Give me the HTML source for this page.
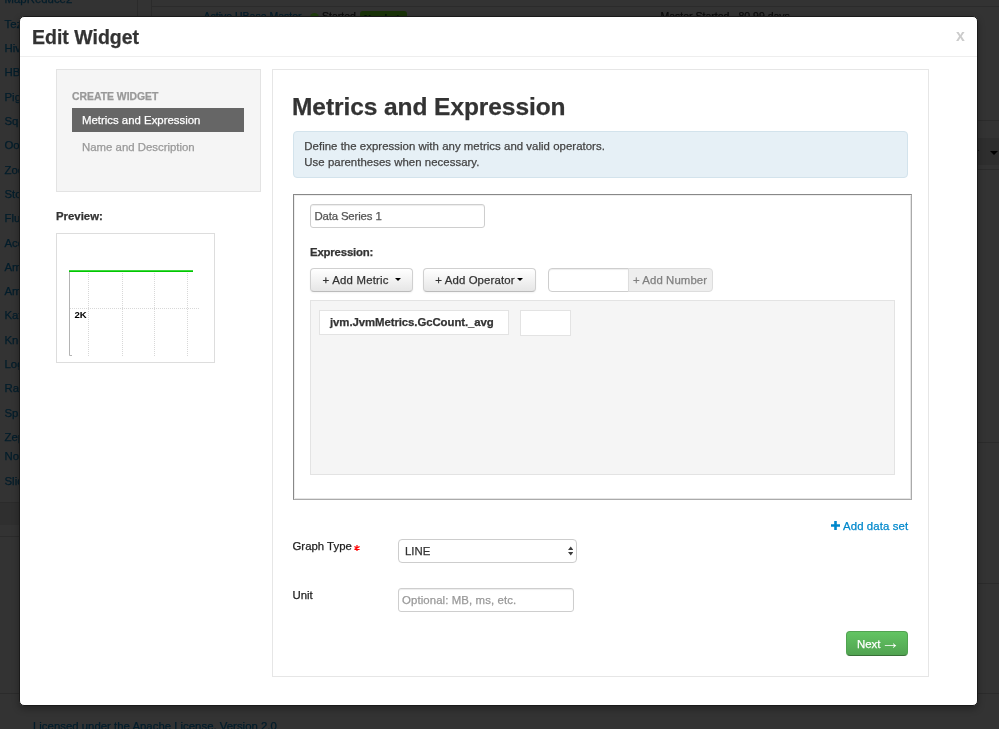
<!DOCTYPE html>
<html lang="en">
<head>
<meta charset="utf-8">
<title>Edit Widget</title>
<style>
html,body{margin:0;padding:0;}
body{width:999px;height:729px;overflow:hidden;position:relative;background:#333;
  font-family:"Liberation Sans","Helvetica Neue",Helvetica,Arial,sans-serif;font-size:12px;line-height:16px;color:#333;}
*{box-sizing:border-box;}
.abs{position:absolute;}
.t{position:absolute;white-space:pre;line-height:16px;font-size:11.4px;letter-spacing:0;-webkit-text-stroke:0.25px currentColor;}
.b{font-weight:bold;}

/* ---------- dimmed page behind the modal ---------- */
#bg{position:absolute;left:0;top:0;width:999px;height:729px;background:#333;overflow:hidden;will-change:transform;}
#bg .lnk{position:absolute;left:4.500px;color:#031d2b;font-size:11.4px;line-height:16px;white-space:pre;-webkit-text-stroke:0.25px currentColor;}
#bg .sm{font-size:10.5px;}
#bg .ln{position:absolute;background:#2b2b2b;}

/* ---------- modal ---------- */
#modal{position:absolute;left:19px;top:16px;width:959px;height:690px;background:#fff;
  border:1px solid #1a1a1a;border-radius:5px;box-shadow:0 3px 7px rgba(0,0,0,.3);}
#content{position:absolute;left:0;top:0;width:999px;height:729px;will-change:transform;}
.well{position:absolute;background:#f5f5f5;border:1px solid #e3e3e3;}
.panel{position:absolute;background:#fff;border:1px solid #e6e6e6;}
.inp{position:absolute;background:#fff;border:1px solid #cecece;border-radius:3px;box-shadow:inset 0 1px 1px rgba(0,0,0,.075);}
.btn{position:absolute;border:1px solid #d0d0d0;border-bottom-color:#bbb;border-radius:4px;
  background:linear-gradient(to bottom,#fff,#e6e6e6);box-shadow:0 1px 2px rgba(0,0,0,.05);}
.caret{position:absolute;width:0;height:0;border-left:3px solid transparent;border-right:3px solid transparent;border-top:3px solid #000;}
</style>
</head>
<body>
<div id="bg">
  <!-- sidebar service list (dimmed) -->
  <div class="lnk" style="top:-9px">MapReduce2</div>
  <div class="lnk" style="top:16px">Tez</div>
  <div class="lnk" style="top:40px">Hive</div>
  <div class="lnk" style="top:64px">HBase</div>
  <div class="lnk" style="top:89px">Pig</div>
  <div class="lnk" style="top:113px">Sqoop</div>
  <div class="lnk" style="top:137px">Oozie</div>
  <div class="lnk" style="top:162px">ZooKeeper</div>
  <div class="lnk" style="top:186px">Storm</div>
  <div class="lnk" style="top:210px">Flume</div>
  <div class="lnk" style="top:235px">Accumulo</div>
  <div class="lnk" style="top:259px">Ambari Infra</div>
  <div class="lnk" style="top:283px">Ambari Metrics</div>
  <div class="lnk" style="top:307px">Kafka</div>
  <div class="lnk" style="top:332px">Knox</div>
  <div class="lnk" style="top:356px">Log Search</div>
  <div class="lnk" style="top:380px">Ranger</div>
  <div class="lnk" style="top:405px">Spark</div>
  <div class="lnk" style="top:429px">Zeppelin</div>
  <div class="lnk" style="top:448px">Notebook</div>
  <div class="lnk" style="top:473px">Slider</div>
  <div class="lnk sm" style="left:203.500px;top:8px">Active HBase Master</div>
  <div class="lnk sm" style="left:322px;top:8px;color:#0b0b0b">Started</div>
  <div class="abs" style="left:310px;top:12.500px;width:9px;height:9px;border-radius:5px;background:#1f3d0c"></div>
  <div class="abs" style="left:360px;top:11px;width:47px;height:14px;border-radius:3px;background:#1a3309"></div>
  <div class="lnk sm" style="left:660.500px;top:8px;color:#0b0b0b">Master Started</div>
  <div class="lnk sm" style="left:738.500px;top:8px;color:#0b0b0b">80.99 days</div>
  <div class="lnk sm" style="left:364px;top:10px;color:#06140a;font-weight:bold;font-size:9.5px">No alerts</div>
  <div class="lnk" style="left:33px;top:718px">Licensed under the Apache License, Version 2.0</div>
  <div class="ln" style="left:137px;top:0;width:1px;height:17px"></div>
  <div class="ln" style="left:151px;top:0;width:1px;height:17px"></div>
  <div class="ln" style="left:151px;top:6px;width:848px;height:1px"></div>
  <div class="ln" style="left:0;top:502px;width:19px;height:1px"></div>
  <div class="abs" style="left:0;top:503px;width:19px;height:22px;background:#2f2f2f"></div>
  <div class="ln" style="left:0;top:536px;width:19px;height:1px"></div>
  <div class="ln" style="left:0;top:693px;width:999px;height:1px"></div>
  <div class="ln" style="left:978px;top:120px;width:21px;height:1px"></div>
  <div class="abs" style="left:978px;top:138px;width:21px;height:27px;background:#2e2e2e"></div>
  <div class="ln" style="left:978px;top:169px;width:21px;height:1px"></div>
  <div class="ln" style="left:978px;top:442px;width:21px;height:1px"></div>
  <div class="ln" style="left:978px;top:583px;width:21px;height:1px"></div>
  <div class="lnk" style="left:975px;top:144px;color:#0b0b0b">r</div>
  <div class="abs" style="left:990px;top:151px;width:0;height:0;border-left:4px solid transparent;border-right:4px solid transparent;border-top:4px solid #000"></div>
</div>

<div id="modal"></div>
<div id="content">
  <div class="abs" style="left:20px;top:56px;width:957px;height:1px;background:#eee"></div>
  <div class="t b" style="left:32px;top:22px;font-size:19.5px;line-height:30px;color:#333;letter-spacing:0">Edit Widget</div>
  <div class="t b" style="left:956px;top:26px;font-size:15.8px;line-height:20px;color:#ccc;letter-spacing:0;-webkit-text-stroke:0">x</div>

  <!-- left navigation well -->
  <div class="well" style="left:56px;top:69px;width:205px;height:123px"></div>
  <div class="t b" style="left:72px;top:89px;font-size:10.4px;color:#999">CREATE WIDGET</div>
  <div class="abs" style="left:72px;top:108px;width:172px;height:24px;background:#666"></div>
  <div class="t" style="left:82px;top:112px;color:#fff">Metrics and Expression</div>
  <div class="t" style="left:82px;top:139px;color:#999">Name and Description</div>

  <!-- preview -->
  <div class="t b" style="left:56px;top:208px">Preview:</div>
  <div class="abs" style="left:56px;top:233px;width:159px;height:130px;border:1px solid #ddd;background:#fff"></div>
  <svg class="abs" style="left:56px;top:233px" width="159" height="130" viewBox="0 0 159 130">
    <g stroke="#d8d8d8" stroke-width="1" stroke-dasharray="1,1" fill="none">
      <path d="M32.5 40V123M66.5 40V123M98.5 40V123M131.5 40V123"/>
      <path d="M14 75.500H144"/>
    </g>
    <path d="M13.500 38V122.500H16" stroke="#b4b4b4" stroke-width="1" fill="none"/>
    <path d="M13 38.200H137" stroke="#00c800" stroke-width="1.700" fill="none"/>
    <text x="18.500" y="85" font-family="Liberation Sans, sans-serif" font-size="9.600" font-weight="bold" fill="#000">2K</text>
  </svg>

  <!-- right wizard content -->
  <div class="panel" style="left:272px;top:69px;width:657px;height:608px"></div>
  <div class="t b" style="left:292px;top:87px;font-size:24.5px;line-height:40px;color:#333;letter-spacing:-0.07px">Metrics and Expression</div>
  <div class="abs" style="left:293px;top:131px;width:615px;height:47px;background:#e6f0f6;border:1px solid #d3e3ec;border-radius:4px"></div>
  <div class="t" style="left:304.300px;top:138px;color:#444;letter-spacing:0.04px">Define the expression with any metrics and valid operators.</div>
  <div class="t" style="left:304.300px;top:154px;color:#444;letter-spacing:0.04px">Use parentheses when necessary.</div>

  <!-- data set fieldset -->
  <div class="abs" style="left:293px;top:194px;width:619px;height:306px;border:1px solid #888;border-right-color:#aaa;border-bottom-color:#aaa;box-shadow:inset 1px 1px 0 #eee,inset -1px -1px 0 #e4e4e4"></div>
  <div class="inp" style="left:310px;top:204px;width:175px;height:24px"></div>
  <div class="t" style="left:314.400px;top:208px;color:#555;letter-spacing:-0.14px">Data Series 1</div>
  <div class="t b" style="left:310px;top:244px;letter-spacing:-0.18px">Expression:</div>

  <div class="btn" style="left:310px;top:268px;width:103px;height:24px"></div>
  <div class="t" style="left:322.500px;top:272px;letter-spacing:0.22px">+ Add Metric</div>
  <div class="caret" style="left:395px;top:278px"></div>
  <div class="btn" style="left:423px;top:268px;width:113px;height:24px"></div>
  <div class="t" style="left:435.300px;top:272px;letter-spacing:0.12px">+ Add Operator</div>
  <div class="caret" style="left:517px;top:278px"></div>
  <div class="inp" style="left:548px;top:268px;width:81px;height:24px;border-radius:4px 0 0 4px"></div>
  <div class="abs" style="left:628px;top:268px;width:85px;height:24px;background:#eee;border:1px solid #ddd;border-radius:0 4px 4px 0"></div>
  <div class="t" style="left:633px;top:272px;color:#808080;letter-spacing:0.08px">+ Add Number</div>

  <div class="well" style="left:310px;top:300px;width:585px;height:175px"></div>
  <div class="abs" style="left:319px;top:310px;width:190px;height:25px;background:#fff;border:1px solid #e3e3e3"></div>
  <div class="t b" style="left:330px;top:314px;letter-spacing:-0.08px">jvm.JvmMetrics.GcCount._avg</div>
  <div class="abs" style="left:520px;top:310px;width:51px;height:26px;background:#fff;border:1px solid #e3e3e3"></div>

  <!-- add data set -->
  <svg class="abs" style="left:831px;top:521px" width="9" height="9" viewBox="0 0 9 9"><path d="M3.200 0H5.800V3.200H9V5.800H5.800V9H3.200V5.800H0V3.200H3.200Z" fill="#08c"/></svg>
  <div class="t" style="left:843px;top:518px;color:#08c;letter-spacing:0.1px">Add data set</div>

  <!-- graph type -->
  <div class="t" style="left:292.500px;top:538px;color:#222">Graph Type</div>
  <svg class="abs" style="left:354.300px;top:544.500px" width="6" height="6" viewBox="0 0 14 14"><g stroke="#f00" stroke-width="2.800" stroke-linecap="butt"><path d="M7 0V14M0.940 3.500L13.060 10.500M13.060 3.500L0.940 10.500"/></g></svg>
  <div class="inp" style="left:398px;top:539px;width:179px;height:24px;box-shadow:none;border-color:#cdcdcd;border-radius:4px"></div>
  <div class="t" style="left:405px;top:543px;color:#333">LINE</div>
  <svg class="abs" style="left:567.500px;top:546px" width="5.500" height="10" viewBox="0 0 6 10"><path d="M3 0L6 4H0ZM3 10L6 6H0Z" fill="#3c3c3c"/></svg>

  <!-- unit -->
  <div class="t" style="left:292.500px;top:587px;color:#222">Unit</div>
  <div class="inp" style="left:398px;top:588px;width:176px;height:24px"></div>
  <div class="t" style="left:402px;top:592px;color:#999;letter-spacing:0.1px">Optional: MB, ms, etc.</div>

  <!-- next -->
  <div class="abs" style="left:846px;top:631px;width:62px;height:25px;border:1px solid #51a351;border-bottom-color:#387038;border-radius:4px;background:linear-gradient(to bottom,#62c462,#51a351)"></div>
  <div class="t" style="left:857px;top:636px;color:#fff">Next <span style="font-size:19px;line-height:0;position:relative;top:0.500px;margin-left:-2.500px;-webkit-text-stroke:0">→</span></div>
</div>

</body>
</html>
